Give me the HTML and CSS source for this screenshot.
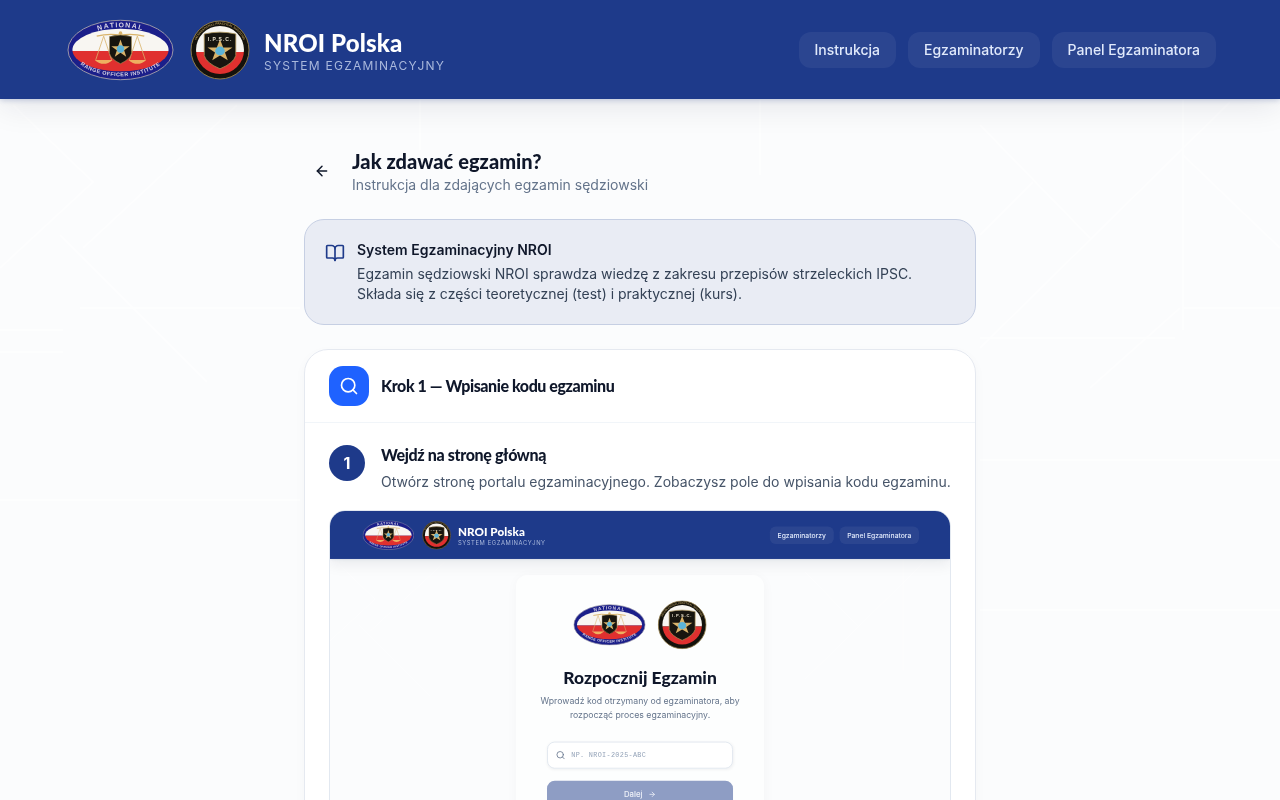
FILE: index.html
```html
<!DOCTYPE html>
<html lang="pl">
<head>
<meta charset="utf-8">
<title>NROI Polska</title>
<link rel="stylesheet" href="styles.css">
</head>
<body>
<svg class="defs" aria-hidden="true">
  <defs>
    <path id="shield" d="M-15 -17 Q0 -21 15 -17 L15 6 Q13 14 0 20 Q-13 14 -15 6 Z"/>
    <path id="star" d="M0 -13 L3.2 -3.8 L12.5 -3.8 L5 1.8 L7.8 10.5 L0 5.2 L-7.8 10.5 L-5 1.8 L-12.5 -3.8 L-3.2 -3.8 Z"/>
    <path id="arcTop" d="M10 31 A44 23 0 0 1 98 31"/>
    <path id="arcBottom" d="M4 29 A50 28.5 0 0 0 104 29"/>
    <path id="arcCircle" d="M4.5 30 A25.5 25.5 0 0 1 55.5 30"/>
    <clipPath id="ovalClip"><ellipse cx="54" cy="31" rx="48.5" ry="21.5"/></clipPath>
    <clipPath id="circleClip"><circle cx="30" cy="30" r="24"/></clipPath>
    <symbol id="logoOval" viewBox="0 0 108 62">
      <ellipse cx="54" cy="31" rx="53" ry="30" fill="#1b1f8a" stroke="#9a97a8" stroke-width="1"/>
      <g clip-path="url(#ovalClip)">
        <rect x="0" y="0" width="108" height="32" fill="#f8f6f2"/>
        <rect x="0" y="32" width="108" height="30" fill="#e0302f"/>
      </g>
      <g fill="none" stroke="#d9b36a" stroke-width=".8">
        <path d="M30 17 Q42 14 54 16 Q66 14 78 17" stroke-width="1.4"/>
        <path d="M37 17 L29 41 M37 17 L45 41 M71 17 L63 41 M71 17 L79 41"/>
      </g>
      <path d="M28 41 Q37 49 46 41 Z M62 41 Q71 49 80 41 Z" fill="#eeb060"/>
      <circle cx="54" cy="14" r="1.8" fill="#d9b36a"/>
      <g transform="translate(54 30) scale(.74)">
        <use href="#shield" fill="#17150f" stroke="#a88f55" stroke-width=".8"/>
        <use href="#star" fill="#d9b36a"/>
        <circle r="5" fill="#5cb4d8"/>
      </g>
      <text class="logo-arc"><textPath href="#arcTop" startOffset="50%" text-anchor="middle">NATIONAL</textPath></text>
      <text class="logo-arc logo-arc-low"><textPath href="#arcBottom" startOffset="50%" text-anchor="middle">RANGE OFFICER INSTITUTE</textPath></text>
    </symbol>
    <symbol id="logoCircle" viewBox="0 0 60 60">
      <circle cx="30" cy="30" r="29" fill="#14120c" stroke="#8f7a48" stroke-width="1"/>
      <g clip-path="url(#circleClip)">
        <rect x="0" y="0" width="60" height="32" fill="#f8f6f2"/>
        <rect x="0" y="32" width="60" height="28" fill="#e0302f"/>
      </g>
      <g transform="translate(30 30) scale(1.05 .94)">
        <use href="#shield" fill="#17150f" stroke="#a88f55" stroke-width=".8"/>
        <use href="#star" fill="#d9b36a" transform="translate(0 1) scale(.95)"/>
        <circle r="4.6" cy="1" fill="#5cb4d8"/>
      </g>
      <text class="logo-ipsc" x="30" y="20.5" text-anchor="middle">I.P.S.C.</text>
      <text class="logo-ring"><textPath href="#arcCircle" startOffset="50%" text-anchor="middle">INTERNATIONAL PRACTICAL SHOOTING</textPath></text>
    </symbol>
  </defs>
</svg>

<svg class="backdrop" viewBox="0 0 1280 800" preserveAspectRatio="none" aria-hidden="true">
  <path d="M13 105 L93 182 L0 268 M237 105 L83 248 M60 235 L207 382 M80 308 L300 308 M0 330 L63 330 M0 352 L63 352 M980 125 L1090 238 M980 235 L1033 182 M1230 102 L980 348 M1183 155 L1280 248 M1183 100 L1183 330 M1183 308 L1280 308 M980 338 L1175 338 M1180 308 L1090 388 M760 100 L760 175 M420 100 L420 150 M0 500 L300 500 M980 460 L1280 460 M980 610 L1280 610"/>
</svg>

<header class="topbar">
  <div class="brand">
    <svg class="logo-oval"><use href="#logoOval"/></svg>
    <svg class="logo-circle"><use href="#logoCircle"/></svg>
    <div class="brand-text">
      <div class="brand-name">NROI Polska</div>
      <div class="brand-sub">SYSTEM EGZAMINACYJNY</div>
    </div>
  </div>
  <nav class="nav">
    <a class="nav-btn">Instrukcja</a>
    <a class="nav-btn">Egzaminatorzy</a>
    <a class="nav-btn">Panel Egzaminatora</a>
  </nav>
</header>

<main class="content">
  <div class="title-row">
    <button class="back-btn" aria-label="Wróć">
      <svg width="16" height="16" viewBox="0 0 24 24" fill="none" stroke="currentColor" stroke-width="2.2" stroke-linecap="round" stroke-linejoin="round"><path d="M19 12H5"/><path d="M12 19l-7-7 7-7"/></svg>
    </button>
    <div>
      <h1 class="page-title">Jak zdawać egzamin?</h1>
      <p class="page-sub">Instrukcja dla zdających egzamin sędziowski</p>
    </div>
  </div>

  <section class="info">
    <svg class="info-icon" width="20" height="20" viewBox="0 0 24 24" fill="none" stroke="currentColor" stroke-width="2" stroke-linecap="round" stroke-linejoin="round"><path d="M12 7v14"/><path d="M3 18a1 1 0 0 1-1-1V4a1 1 0 0 1 1-1h5a4 4 0 0 1 4 4 4 4 0 0 1 4-4h5a1 1 0 0 1 1 1v13a1 1 0 0 1-1 1h-6a3 3 0 0 0-3 3 3 3 0 0 0-3-3z"/></svg>
    <div>
      <h2 class="info-title">System Egzaminacyjny NROI</h2>
      <p class="info-text">Egzamin sędziowski NROI sprawdza wiedzę z zakresu przepisów strzeleckich IPSC. Składa się z części teoretycznej (test) i praktycznej (kurs).</p>
    </div>
  </section>

  <section class="card">
    <div class="card-head">
      <span class="card-icon">
        <svg width="20" height="20" viewBox="0 0 24 24" fill="none" stroke="currentColor" stroke-width="2" stroke-linecap="round" stroke-linejoin="round"><circle cx="11" cy="11" r="8"/><path d="M21 21l-4.3-4.3"/></svg>
      </span>
      <h2 class="card-title">Krok 1 — Wpisanie kodu egzaminu</h2>
    </div>
    <div class="card-body">
      <div class="step">
        <span class="step-num">1</span>
        <div>
          <h3 class="step-title">Wejdź na stronę główną</h3>
          <p class="step-text">Otwórz stronę portalu egzaminacyjnego. Zobaczysz pole do wpisania kodu egzaminu.</p>
        </div>
      </div>

      <div class="shot">
        <div class="shot-page">
          <svg class="shot-lines" viewBox="0 0 1280 800" aria-hidden="true">
            <path d="M13 105 L93 182 L0 268 M237 105 L83 248 M60 235 L207 382 M1183 100 L1183 330 M1230 102 L980 348 M980 125 L1090 238"/>
          </svg>
          <header class="topbar">
            <div class="brand">
              <svg class="logo-oval"><use href="#logoOval"/></svg>
              <svg class="logo-circle"><use href="#logoCircle"/></svg>
              <div class="brand-text">
                <div class="brand-name">NROI Polska</div>
                <div class="brand-sub">SYSTEM EGZAMINACYJNY</div>
              </div>
            </div>
            <nav class="nav">
              <a class="nav-btn">Egzaminatorzy</a>
              <a class="nav-btn">Panel Egzaminatora</a>
            </nav>
          </header>
          <div class="start-card">
            <div class="start-logos">
              <svg class="start-oval"><use href="#logoOval"/></svg>
              <svg class="start-circle"><use href="#logoCircle"/></svg>
            </div>
            <h2 class="start-title">Rozpocznij Egzamin</h2>
            <p class="start-text">Wprowadź kod otrzymany od egzaminatora, aby rozpocząć proces egzaminacyjny.</p>
            <div class="start-input">
              <svg width="20" height="20" viewBox="0 0 24 24" fill="none" stroke="currentColor" stroke-width="2" stroke-linecap="round"><circle cx="11" cy="11" r="8"/><path d="M21 21l-4.3-4.3"/></svg>
              <span>NP. NROI-2025-ABC</span>
            </div>
            <div class="start-btn">Dalej
              <svg width="16" height="16" viewBox="0 0 24 24" fill="none" stroke="currentColor" stroke-width="2.4" stroke-linecap="round" stroke-linejoin="round"><path d="M5 12h14"/><path d="M12 5l7 7-7 7"/></svg>
            </div>
          </div>
        </div>
      </div>
    </div>
  </section>
</main>
</body>
</html>
```

FILE: styles.css
```css
* { box-sizing: border-box; }

html, body {
  margin: 0;
  height: 100%;
  overflow: hidden;
}

body {
  background: #fbfcfd;
  font-family: "Inter", "Liberation Sans", sans-serif;
  color: #0f172a;
}

h1, h2, h3, p { margin: 0; }

.defs {
  position: absolute;
  width: 0;
  height: 0;
}

.backdrop {
  position: fixed;
  inset: 0;
  width: 100%;
  height: 100%;
}

.backdrop path, .shot-lines path {
  fill: none;
  stroke: #ffffff;
  stroke-width: 2;
  opacity: .5;
}

.topbar {
  position: relative;
  height: 99px;
  flex: none;
  display: flex;
  align-items: center;
  justify-content: space-between;
  padding: 0 64px 0 67px;
  background: #1e3a8a;
  box-shadow: 0 1px 6px rgba(30, 58, 138, 0.25), 0 8px 30px rgba(15, 23, 42, 0.09);
}

.brand {
  display: flex;
  align-items: center;
}

.logo-oval {
  width: 107px;
  height: 62px;
  margin-right: 16px;
}

.logo-circle {
  width: 60px;
  height: 60px;
  margin-right: 14px;
}

.logo-arc {
  font: 700 7px "Liberation Sans", sans-serif;
  fill: #d8d4e4;
  letter-spacing: 1.3px;
}

.logo-arc-low {
  font-size: 5.4px;
  letter-spacing: .5px;
}

.logo-ipsc {
  font: 700 5px "Liberation Sans", sans-serif;
  fill: #e8e0cc;
  letter-spacing: 1px;
}

.logo-ring {
  font: 700 3px "Liberation Sans", sans-serif;
  fill: #a88f55;
}

.brand-text {
  display: flex;
  flex-direction: column;
  padding-top: 2px;
}

.brand-name {
  font: 900 24px/30px "Lato", "Liberation Sans", sans-serif;
  color: #ffffff;
  letter-spacing: .15px;
}

.brand-sub {
  font-size: 12px;
  line-height: 15px;
  letter-spacing: 1.25px;
  color: #a9b8dc;
}

.nav {
  display: flex;
  gap: 12px;
}

.nav-btn {
  height: 36px;
  display: flex;
  align-items: center;
  padding: 0 16px;
  border-radius: 12px;
  background: rgba(255, 255, 255, 0.06);
  color: #e0e9fb;
  font-size: 14px;
  font-weight: 500;
}

.content {
  position: relative;
  width: 672px;
  margin: 0 auto;
  padding-top: 48px;
}

.title-row {
  display: flex;
  align-items: center;
  gap: 12px;
  margin-bottom: 24px;
}

.back-btn {
  width: 36px;
  height: 36px;
  display: flex;
  align-items: center;
  justify-content: center;
  padding: 0;
  border: 0;
  background: transparent;
  color: #0f172a;
}

.page-title {
  font: 900 20px/28px "Lato", "Liberation Sans", sans-serif;
  letter-spacing: .05px;
  color: #0f172a;
}

.page-sub {
  font-size: 14px;
  line-height: 20px;
  color: #64748b;
}

.info {
  display: flex;
  gap: 12px;
  padding: 20px;
  margin-bottom: 24px;
  border: 1px solid #c6cfe3;
  border-radius: 20px;
  background: #e9ecf4;
}

.info-icon {
  flex: none;
  margin-top: 3px;
  color: #1e3a8a;
}

.info-title {
  font-size: 14px;
  font-weight: 600;
  line-height: 20px;
  color: #0f172a;
}

.info-text {
  margin-top: 4px;
  font-size: 14px;
  line-height: 20px;
  color: #334155;
}

.card {
  border: 1px solid #e5e9f0;
  border-radius: 24px;
  background: #ffffff;
  box-shadow: 0 4px 12px rgba(15, 23, 42, 0.03);
  overflow: hidden;
}

.card-head {
  display: flex;
  align-items: center;
  gap: 12px;
  padding: 16px 24px;
  border-bottom: 1px solid #f1f5f9;
}

.card-icon {
  width: 40px;
  height: 40px;
  display: flex;
  align-items: center;
  justify-content: center;
  border-radius: 14px;
  background: #1f62ff;
  color: #ffffff;
}

.card-title {
  font: 900 16px/24px "Lato", "Liberation Sans", sans-serif;
  letter-spacing: -.43px;
  color: #0f172a;
}

.card-body {
  padding: 20px 24px;
}

.step {
  display: flex;
  gap: 16px;
  margin-bottom: 18px;
}

.step-num {
  flex: none;
  width: 36px;
  height: 36px;
  margin-top: 2px;
  display: flex;
  align-items: center;
  justify-content: center;
  border-radius: 50%;
  background: #1e3a8a;
  color: #ffffff;
  font-size: 16px;
  font-weight: 700;
}

.step-title {
  font: 900 16px/24px "Lato", "Liberation Sans", sans-serif;
  letter-spacing: -.36px;
  color: #0f172a;
}

.step-text {
  margin-top: 5px;
  font-size: 14px;
  line-height: 20px;
  color: #475569;
}

.shot {
  width: 622px;
  height: 400px;
  border: 1px solid #e2e8f0;
  border-radius: 16px;
  overflow: hidden;
}

.shot-page {
  position: relative;
  width: 1280px;
  height: 800px;
  display: flex;
  flex-direction: column;
  background: #fbfcfd;
  transform: scale(.4844);
  transform-origin: 0 0;
  filter: blur(1.1px);
}

.shot-lines {
  position: absolute;
  inset: 0;
}

.start-card {
  position: relative;
  width: 512px;
  margin: 33px auto 0;
  padding: 52px 64px 48px;
  border-radius: 24px;
  background: rgba(255, 255, 255, 0.6);
  box-shadow: 0 4px 24px rgba(15, 23, 42, 0.03);
}

.start-logos {
  display: flex;
  justify-content: center;
  align-items: center;
  gap: 24px;
}

.start-oval {
  width: 150px;
  height: 86px;
}

.start-circle {
  width: 102px;
  height: 102px;
}

.start-title {
  margin-top: 36px;
  font: 900 36px/44px "Lato", "Liberation Sans", sans-serif;
  text-align: center;
  color: #0f172a;
}

.start-text {
  margin: 13px -30px 0;
  font-size: 18px;
  line-height: 28px;
  text-align: center;
  color: #64748b;
}

.start-input {
  height: 56px;
  margin-top: 41px;
  display: flex;
  align-items: center;
  gap: 12px;
  padding: 0 16px;
  border: 2px solid #e2e8f0;
  border-radius: 16px;
  background: #ffffff;
  color: #64748b;
  box-shadow: 0 2px 6px rgba(15, 23, 42, 0.05);
}

.start-input span {
  font: 14px "Liberation Mono", monospace;
  letter-spacing: .7px;
  color: #94a3b8;
}

.start-btn {
  height: 56px;
  margin-top: 25px;
  display: flex;
  align-items: center;
  justify-content: center;
  gap: 12px;
  border-radius: 16px;
  background: #8e9dc4;
  color: #eef1f8;
  font-size: 16px;
  font-weight: 500;
}
```
